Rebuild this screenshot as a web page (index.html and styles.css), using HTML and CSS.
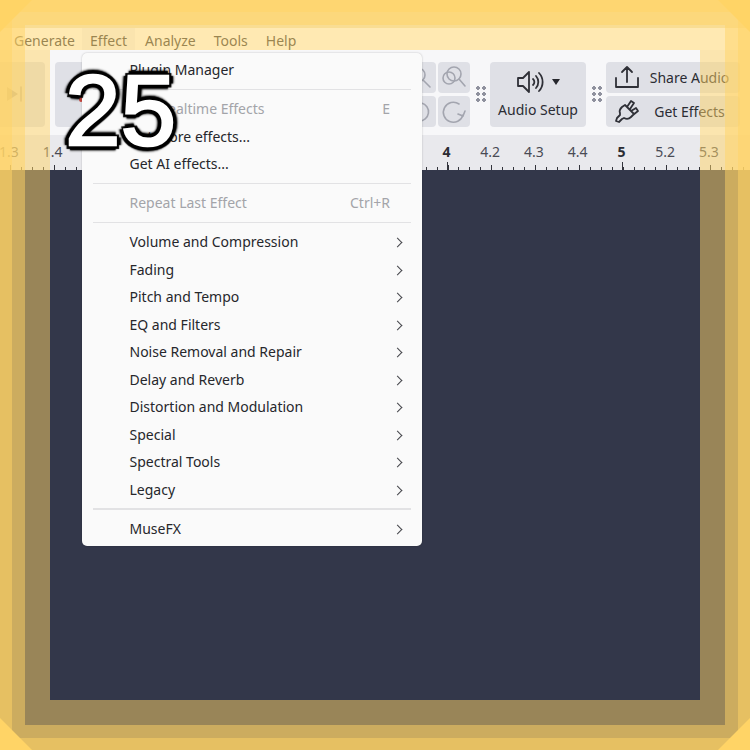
FILE: index.html
```html
<!DOCTYPE html>
<html lang="en">
<head>
    <meta charset="UTF-8">
    <title>Effect menu</title>
    <link rel="stylesheet" href="styles.css">
</head>
<body>
    <div class="app">
        <div class="titlebar"></div>

        <!-- menu bar -->
        <div class="menubar">
            <span class="menubar-item menubar-first">Generate</span>
            <span class="menubar-item is-open">Effect</span>
            <span class="menubar-item">Analyze</span>
            <span class="menubar-item">Tools</span>
            <span class="menubar-item">Help</span>
        </div>

        <!-- toolbar -->
        <div class="toolbar">
            <div class="tool tool-tall tool-skip">
                <svg width="20" height="18" viewBox="0 0 20 18"><path class="icon-fill" d="M2 2l11 7-11 7z"/><path class="icon-line" d="M16 2v14"/></svg>
            </div>
            <div class="tool tool-tall tool-record">
                <svg width="4" height="6" viewBox="0 0 4 6"><ellipse cx="2" cy="3" rx="2" ry="3" fill="#c9473f"/></svg>
            </div>

            <div class="tool-grid">
                <div class="tool tool-small">
                    <svg width="24" height="24" viewBox="0 0 24 24"><circle class="icon-line" cx="10" cy="10" r="7"/><path class="icon-line" d="M15 15l7 7"/></svg>
                </div>
                <div class="tool tool-small">
                    <svg width="24" height="24" viewBox="0 0 24 24"><circle class="icon-line" cx="7" cy="13" r="6"/><circle class="icon-line" cx="12" cy="9" r="7"/><path class="icon-line" d="M17 14l6 7"/></svg>
                </div>
                <div class="tool tool-small">
                    <svg width="24" height="24" viewBox="0 0 24 24"><path class="icon-line" d="M7 5A9 9 0 1 1 5 19"/><path class="icon-line" d="M2 9l4-4 5 1"/></svg>
                </div>
                <div class="tool tool-small">
                    <svg width="24" height="24" viewBox="0 0 24 24"><path class="icon-line" d="M17 5a10 10 0 1 0 4 11"/><path class="icon-line" d="M23 12l-2 5-5-2"/></svg>
                </div>
            </div>

            <div class="grip"></div>

            <div class="tool tool-audio">
                <div class="audio-icons">
                    <svg width="28" height="24" viewBox="0 0 28 24"><path class="icon-dark" d="M2 8h5l6-6v20l-6-6H2z"/><path class="icon-dark" d="M17 9a4 4 0 0 1 0 6M20 6a9 9 0 0 1 0 12M23 3a13 13 0 0 1 0 18"/></svg>
                    <span class="caret"></span>
                </div>
                <span>Audio Setup</span>
            </div>

            <div class="grip"></div>

            <div class="tool-stack">
                <div class="tool tool-wide">
                    <svg width="24" height="24" viewBox="0 0 24 24"><path class="icon-dark" d="M1 13v9h22v-9M12 17V2M7 7l5-5 5 5"/></svg>
                    <span class="tool-label">Share Audio</span>
                </div>
                <div class="tool tool-wide">
                    <svg width="24" height="24" viewBox="0 0 24 24"><path class="icon-dark" d="M10 6l9 9-3 3c-2 2-5 2-7 1l-2 1-3 3-3-1 1-3 3-3 0-2c-1-2 0-4 2-6zM12 8l4-6 3 2-4 6M16 12l5-3 2 3-5 4"/></svg>
                    <span class="tool-label">Get Effects</span>
                </div>
            </div>
        </div>

        <!-- timeline ruler -->
        <div class="ruler">
            <span>1.3</span><span>1.4</span><span class="major">2</span><span>2.2</span><span>2.3</span><span>2.4</span>
            <span class="major">3</span><span>3.2</span><span>3.3</span><span>3.4</span><span class="major">4</span><span>4.2</span>
            <span>4.3</span><span>4.4</span><span class="major">5</span><span>5.2</span><span>5.3</span>
        </div>

        <div class="track"></div>
    </div>

    <!-- effect dropdown -->
    <div class="menu">
        <div class="menu-row"><span>Plugin Manager</span></div>
        <div class="menu-sep"></div>
        <div class="menu-row is-disabled"><span>Add Realtime Effects</span><span class="shortcut-e">E</span></div>
        <div class="menu-row"><span>Get more effects...</span></div>
        <div class="menu-row"><span>Get AI effects...</span></div>
        <div class="menu-sep"></div>
        <div class="menu-row is-disabled"><span>Repeat Last Effect</span><span>Ctrl+R</span></div>
        <div class="menu-sep"></div>
        <div class="menu-row has-sub"><span>Volume and Compression</span></div>
        <div class="menu-row has-sub"><span>Fading</span></div>
        <div class="menu-row has-sub"><span>Pitch and Tempo</span></div>
        <div class="menu-row has-sub"><span>EQ and Filters</span></div>
        <div class="menu-row has-sub"><span>Noise Removal and Repair</span></div>
        <div class="menu-row has-sub"><span>Delay and Reverb</span></div>
        <div class="menu-row has-sub"><span>Distortion and Modulation</span></div>
        <div class="menu-row has-sub"><span>Special</span></div>
        <div class="menu-row has-sub"><span>Spectral Tools</span></div>
        <div class="menu-row has-sub"><span>Legacy</span></div>
        <div class="menu-sep"></div>
        <div class="menu-row has-sub"><span>MuseFX</span></div>
    </div>

    <!-- yellow frame over the capture -->
    <div class="frame frame-inner"></div>
    <div class="frame frame-middle"></div>
    <div class="frame frame-outer"></div>
    <div class="corner corner-tl"></div>
    <div class="corner corner-tr"></div>
    <div class="corner corner-bl"></div>
    <div class="corner corner-br"></div>

    <div class="step-number">25</div>
</body>
</html>
```

FILE: styles.css
```css
/* base */
html, body {
    margin: 0;
    height: 100%;
    overflow: hidden;
}

body {
    position: relative;
    width: 750px;
    height: 750px;
    font-family: "Noto Sans", "Open Sans", sans-serif;
    font-size: 14px;
    color: #2b2c33;
    background: #33374a;
}

.app {
    display: flex;
    flex-direction: column;
    height: 750px;
}

.titlebar {
    height: 28px;
    background: #f3e6c0;
}

/* menu bar */
.menubar {
    display: flex;
    gap: 2px;
    height: 22px;
    padding-left: 6px;
    background: #fff;
}

.menubar-item {
    padding: 0 8px;
    line-height: 26px;
    color: #35363c;
}

.menubar-first {
    margin-right: -3px;
}

.menubar-item.is-open {
    background: #f4f4f6;
}

/* toolbar */
.toolbar {
    display: flex;
    align-items: center;
    height: 85px;
    padding-top: 3px;
    box-sizing: border-box;
    background: #f7f7f9;
    overflow: hidden;
}

.tool {
    display: flex;
    align-items: center;
    justify-content: center;
    flex-shrink: 0;
    background: #dfe0e6;
    border-radius: 4px;
}

.tool-tall {
    height: 65px;
}

.tool-skip {
    width: 60px;
    margin-left: -15px;
    margin-right: 10px;
}

.tool-record {
    width: 46px;
    justify-content: flex-start;
    padding-left: 24px;
    box-sizing: border-box;
}

.tool-record svg {
    margin-top: 9px;
}

.tool-grid {
    display: grid;
    grid-template-columns: 32px 32px;
    grid-auto-rows: 31px;
    gap: 3px 2px;
    margin-left: auto;
}

.grip {
    flex-shrink: 0;
    width: 12px;
    height: 18px;
    margin: 0 3px 0 5px;
    background: radial-gradient(circle, #8f919e 1.6px, transparent 2px) 0 0 / 6px 6px;
}

.tool-audio {
    flex-direction: column;
    gap: 5px;
    width: 96px;
    height: 65px;
}

.audio-icons {
    display: flex;
    align-items: center;
    gap: 8px;
    height: 26px;
}

.caret {
    width: 0;
    height: 0;
    border-left: 4px solid transparent;
    border-right: 4px solid transparent;
    border-top: 6px solid #26272d;
}

.tool-stack {
    display: flex;
    flex-direction: column;
    gap: 3px;
    flex-shrink: 0;
    margin-right: 10px;
}

.tool-wide {
    width: 134px;
    height: 31px;
    padding-left: 9px;
    box-sizing: border-box;
}

.tool-label {
    flex: 1;
    text-align: center;
}

/* icons */
svg {
    display: block;
    overflow: visible;
}

.icon-line {
    fill: none;
    stroke: #a3a5af;
    stroke-width: 1.6;
    stroke-linecap: round;
    stroke-linejoin: round;
}

.icon-fill {
    fill: #a3a5af;
}

.icon-dark {
    fill: none;
    stroke: #2f3037;
    stroke-width: 1.8;
    stroke-linecap: round;
    stroke-linejoin: round;
}

/* ruler */
.ruler {
    display: flex;
    height: 35px;
    margin-left: -12.9px;
    color: #4a4b55;
    line-height: 34px;
    background:
        repeating-linear-gradient(90deg, #33343c 0 1px, transparent 1px 175px) 109.9px bottom / 100% 8px no-repeat,
        repeating-linear-gradient(90deg, #33343c 0 1px, transparent 1px 43.75px) 22.4px bottom / 100% 5px no-repeat,
        repeating-linear-gradient(90deg, #33343c 0 1px, transparent 1px 10.94px) 11.4px bottom / 100% 3px no-repeat,
        #e9e9ed;
}

.ruler span {
    flex: 0 0 43.75px;
    text-align: center;
}

.ruler .major {
    font-weight: 700;
    color: #2b2c33;
}

.track {
    flex: 1;
    background: #33374a;
}

/* dropdown */
.menu {
    position: absolute;
    left: 82px;
    top: 53px;
    width: 340px;
    height: 493px;
    padding-top: 3px;
    box-sizing: border-box;
    background: #fafafa;
    border-radius: 5px;
    box-shadow: 0 0 2px rgba(0,0,0,0.25);
}

.menu-row {
    position: relative;
    display: flex;
    justify-content: space-between;
    align-items: center;
    height: 27.5px;
    padding: 0 32px 0 47.5px;
    color: #26272c;
}

.menu-row.is-disabled {
    color: #a3a4a9;
}

.has-sub::after {
    content: "";
    position: absolute;
    right: 21px;
    top: 11px;
    width: 6px;
    height: 6px;
    border-top: 1.6px solid #44454a;
    border-right: 1.6px solid #44454a;
    transform: rotate(45deg);
}

.menu-sep {
    height: 1.5px;
    margin: 5px 11px;
    background: #e2e2e4;
}

/* frame */
.frame {
    position: absolute;
    inset: 0;
    border-style: solid;
    border-color: rgba(255, 212, 102, 0.5);
}

.frame-inner {
    border-width: 50px;
}

.frame-middle {
    border-width: 25px;
}

.frame-outer {
    border-width: 12px;
}

.corner {
    position: absolute;
    width: 32px;
    height: 32px;
    background: #ffd466;
}

.corner-tl {
    left: 0;
    top: 0;
    clip-path: polygon(0 0, 100% 0, 0 100%);
}

.corner-tr {
    right: 0;
    top: 0;
    clip-path: polygon(0 0, 100% 0, 100% 100%);
}

.corner-bl {
    left: 0;
    bottom: 0;
    clip-path: polygon(0 0, 100% 100%, 0 100%);
}

.corner-br {
    right: 0;
    bottom: 0;
    clip-path: polygon(100% 0, 100% 100%, 0 100%);
}

/* step badge */
.step-number {
    position: absolute;
    left: 65px;
    top: 53px;
    font-family: "Liberation Sans", Arial, sans-serif;
    font-size: 100px;
    line-height: 115px;
    color: #fff;
    -webkit-text-stroke: 2.5px #fff;
    text-shadow:
        5px 0 1px #000, -5px 0 1px #000, 0 5px 1px #000, 0 -5px 1px #000,
        3.5px 3.5px 1px #000, -3.5px 3.5px 1px #000, 3.5px -3.5px 1px #000, -3.5px -3.5px 1px #000,
        6px 0 2px rgba(0,0,0,0.6), -6px 0 2px rgba(0,0,0,0.6), 0 6px 2px rgba(0,0,0,0.6), 0 -6px 2px rgba(0,0,0,0.6);
}
```
